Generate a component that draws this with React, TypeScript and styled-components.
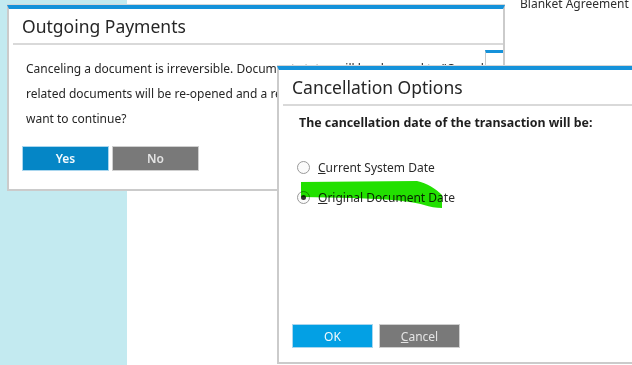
import styled, { createGlobalStyle } from 'styled-components';

const GlobalStyle = createGlobalStyle`
  html, body {
    margin: 0;
    padding: 0;
    overflow: hidden;
  }
  body {
    font-family: 'Noto Sans', 'Open Sans', sans-serif;
    color: #2b2b2b;
  }
`;

const Desktop = styled.div`
  position: relative;
  width: 632px;
  height: 365px;
  display: flex;
  overflow: hidden;
  background: #ffffff;
`;

const SidePanel = styled.div`
  width: 127px;
  flex-shrink: 0;
  background: #c3eaf0;
`;

const MainPanel = styled.div`
  flex: 1;
  padding-left: 393px;
`;

const FieldLabel = styled.div`
  font-size: 12px;
  line-height: 14px;
  margin-top: -3px;
  color: #2e2e2e;
  white-space: nowrap;
`;

const Window = styled.div<{ $left: number; $top: number; $width: number; $height: number }>`
  position: absolute;
  left: ${p => p.$left}px;
  top: ${p => p.$top}px;
  width: ${p => p.$width}px;
  height: ${p => p.$height}px;
  box-sizing: border-box;
  background: #ffffff;
  border: 2px solid #cbcbcb;
  border-top: 4px solid #1592da;
  box-shadow: 0 -1px 0 #d6d6d6;
  display: flex;
  flex-direction: column;
  overflow: hidden;
`;

const TitleBar = styled.div`
  height: 34px;
  margin-left: 4px;
  padding-left: 9px;
  border-bottom: 2px solid #d9d9d9;
  font-size: 17.5px;
  line-height: 34px;
  color: #262626;
  white-space: nowrap;
`;

const MessageBody = styled.div`
  padding: 11px 0 0 17px;
  display: flex;
  flex-direction: column;
`;

const MessageLine = styled.div`
  font-size: 12px;
  line-height: 25px;
  white-space: nowrap;
  color: #262626;
`;

const ButtonRow = styled.div<{ $gap: number }>`
  display: flex;
  gap: ${p => p.$gap}px;
`;

const DialogButtons = styled(ButtonRow)`
  margin-top: 15px;
  margin-left: -4px;
`;

const Button = styled.div<{ $tone: 'deep' | 'bright' | 'grey'; $bold?: boolean; $width: number; $height: number }>`
  width: ${p => p.$width}px;
  height: ${p => p.$height}px;
  box-sizing: border-box;
  display: flex;
  align-items: center;
  justify-content: center;
  font-size: 12px;
  font-weight: ${p => (p.$bold ? 600 : 400)};
  background: ${p => (p.$tone === 'deep' ? '#0586c6' : p.$tone === 'bright' ? '#03a0e4' : '#797979')};
  border: 1px solid ${p => (p.$tone === 'grey' ? '#cfcfcf' : '#a9d6ee')};
  color: ${p => (p.$tone === 'grey' ? '#e4e4e4' : '#f2f9fd')};
`;

const PeekWindow = styled.div`
  position: absolute;
  left: 476px;
  top: 41px;
  width: 30px;
  height: 40px;
  background: #ffffff;
  border-left: 1px solid #c8c8c8;
  border-top: 3px solid #1592da;
`;

const OptionsBody = styled.div`
  flex: 1;
  display: flex;
  flex-direction: column;
  padding: 8px 0 14px 13px;
  position: relative;
`;

const Prompt = styled.div`
  font-size: 12.4px;
  font-weight: 700;
  line-height: 18px;
  padding-left: 7px;
  color: #1f1f1f;
  white-space: nowrap;
`;

const RadioGroup = styled.div`
  margin-top: 25px;
  display: flex;
  flex-direction: column;
  gap: 10px;
  padding-left: 5px;
`;

const RadioRow = styled.div`
  height: 20px;
  display: flex;
  align-items: center;
  gap: 8px;
  font-size: 12px;
  color: #2b2b2b;
`;

const RadioCircle = styled.span<{ $checked?: boolean }>`
  width: 13px;
  height: 13px;
  box-sizing: border-box;
  border-radius: 50%;
  border: 1px solid #9a9a9a;
  background: #fbfbfb;
  display: flex;
  align-items: center;
  justify-content: center;

  &::after {
    content: '';
    width: 5px;
    height: 5px;
    border-radius: 50%;
    background: ${p => (p.$checked ? '#333333' : 'transparent')};
  }
`;

const ButtonBar = styled(ButtonRow)`
  margin-top: auto;
`;

const Highlight = styled.svg`
  position: absolute;
  left: 20px;
  top: 74px;
  mix-blend-mode: multiply;
  pointer-events: none;
`;

export default function App() {
  return (
    <>
      <GlobalStyle />
      <Desktop>
        <SidePanel />
        <MainPanel>
          <FieldLabel>Blanket Agreement</FieldLabel>
        </MainPanel>

        <Window $left={7} $top={5} $width={498} $height={186}>
          <TitleBar>Outgoing Payments</TitleBar>
          <MessageBody>
            <MessageLine>
              Canceling a document is irreversible. Document status will be changed to "Canceled" and
            </MessageLine>
            <MessageLine>
              related documents will be re-opened and a reversal transaction will be created. Do you
            </MessageLine>
            <MessageLine>want to continue?</MessageLine>
            <DialogButtons $gap={3}>
              <Button $tone="deep" $bold $width={87} $height={25}>
                Yes
              </Button>
              <Button $tone="grey" $bold $width={87} $height={25}>
                No
              </Button>
            </DialogButtons>
          </MessageBody>
          <PeekWindow />
        </Window>

        <Window $left={277} $top={66} $width={380} $height={298}>
          <TitleBar>Cancellation Options</TitleBar>
          <OptionsBody>
            <Prompt>The cancellation date of the transaction will be:</Prompt>
            <RadioGroup>
              <RadioRow>
                <RadioCircle />
                <span>
                  <u>C</u>urrent System Date
                </span>
              </RadioRow>
              <RadioRow>
                <RadioCircle $checked />
                <span>
                  <u>O</u>riginal Document Date
                </span>
              </RadioRow>
            </RadioGroup>
            <ButtonBar $gap={6}>
              <Button $tone="bright" $width={81} $height={24}>
                OK
              </Button>
              <Button $tone="grey" $width={81} $height={24}>
                <span>
                  <u>C</u>ancel
                </span>
              </Button>
            </ButtonBar>
            <Highlight width="150" height="32" viewBox="0 0 150 32">
              <path
                d="M2 2 L118 1 C128 3 137 9 143 15 L143 28 C137 28 131 27 125 25 C108 20 80 18 2 17 Z"
                fill="#22e000"
              />
            </Highlight>
          </OptionsBody>
        </Window>
      </Desktop>
    </>
  );
}
